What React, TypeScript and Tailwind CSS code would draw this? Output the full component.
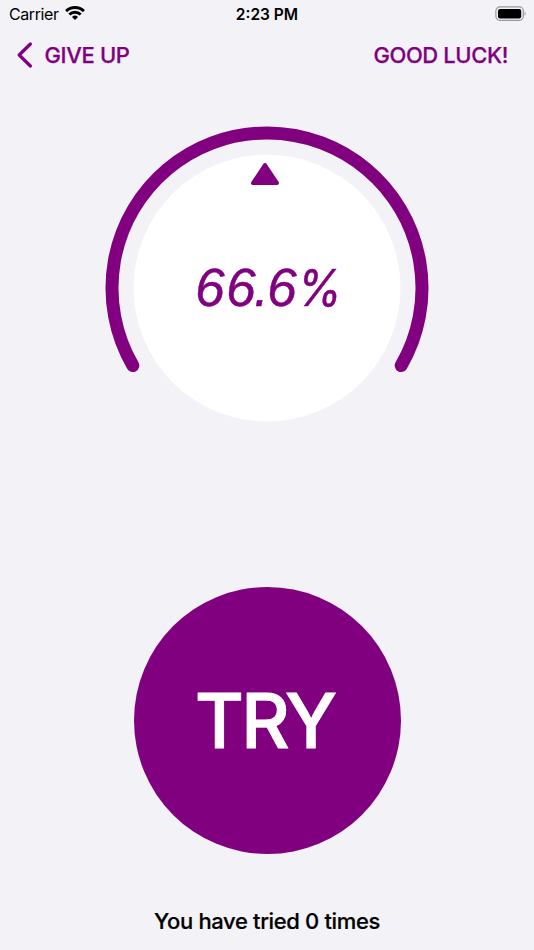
export default function App() {
  return (
    <div className="flex h-[950px] w-[534px] flex-col overflow-hidden bg-[#f2f2f7] font-['Inter',sans-serif] text-[#800080]">
      <header className="flex h-7 items-center justify-between pr-[7px] pl-[9px] text-black">
        <div className="flex flex-1 items-center gap-[6px]">
          <span className="text-[16px] leading-7 tracking-[-0.4px]">Carrier</span>
          <svg className="-mt-[2px]" width="20" height="14" viewBox="0 0 20 14" fill="black">
            <path d="M10 14 7 11a4.4 4.4 0 0 1 6 0Z" />
            <path d="M3.3 7.4a9.6 9.6 0 0 1 13.4 0l-2 2.2a6.6 6.6 0 0 0-9.4 0Z" />
            <path d="M.1 4.1a14.2 14.2 0 0 1 19.8 0l-2 2.2a11.2 11.2 0 0 0-15.8 0Z" />
          </svg>
        </div>
        <span className="mt-px mr-[2px] text-[15.5px] font-semibold">2:23 PM</span>
        <div className="flex flex-1 justify-end">
          <svg className="-mt-[2px]" width="32" height="15" viewBox="0 0 32 15">
            <rect x=".9" y=".9" width="27.4" height="13.4" rx="4" fill="none" stroke="#98989c" strokeWidth="1.2" />
            <rect x="3" y="3" width="23.2" height="9.4" rx="2" />
            <path d="M29.6 5.2q2.2 2.4 0 4.8Z" fill="#98989c" />
          </svg>
        </div>
      </header>
      <nav className="flex h-[54px] items-center justify-between pr-[26px] pl-[17px] text-[22px] font-medium">
        <button className="flex items-center gap-[11.5px]">
          <svg className="-mt-px" width="16" height="26" viewBox="0 0 16 26" fill="none" stroke="currentColor" strokeWidth="3.2" strokeLinecap="round" strokeLinejoin="round">
            <path d="M13.4 2 2.2 13l11.2 11" />
          </svg>
          <span className="tracking-[-0.35px] [-webkit-text-stroke:0.25px_currentColor]">GIVE UP</span>
        </button>
        <button className="tracking-[-0.4px] [-webkit-text-stroke:0.25px_currentColor]">GOOD LUCK!</button>
      </nav>
      <main className="flex flex-1 flex-col items-center">
        <svg className="mt-[44px] shrink-0" width="324" height="322" viewBox="105 126 324 322">
          <circle cx="267" cy="288" r="133.5" fill="white" />
          <path d="M132.8 365.5A155 155 0 1 1 401.2 365.5" fill="none" stroke="#800080" strokeWidth="13" strokeLinecap="round" />
          <path d="M265 165 253 183h24Z" fill="#800080" stroke="#800080" strokeWidth="4" strokeLinejoin="round" />
          <g fill="#800080" fontStyle="italic" stroke="#800080" strokeWidth="0.4">
            <text className="font-['Liberation_Sans',sans-serif]" x="195 226 254 267" y="306" fontSize="53.5">66.6</text>
            <text x="297" y="306" fontSize="51" textLength="45" lengthAdjust="spacingAndGlyphs">%</text>
          </g>
        </svg>
        <button className="mt-[139px] flex size-[267px] shrink-0 items-center justify-center rounded-full bg-[#800080] pt-px pr-[9px] text-[75.5px] font-medium tracking-[-3.1px] text-white [-webkit-text-stroke:0.8px_currentColor]">
          <span className="-mr-[4px]">TRY</span>
        </button>
        <p className="mt-[51px] text-[22px] font-medium tracking-[-0.36px] text-black [-webkit-text-stroke:0.2px_currentColor]">You have tried 0 times</p>
      </main>
    </div>
  );
}
